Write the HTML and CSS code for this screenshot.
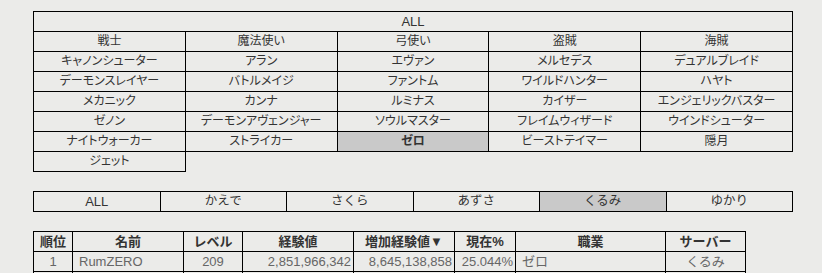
FILE: index.html
```html
<!DOCTYPE html>
<html lang="ja">
<head>
<meta charset="utf-8">
<link rel="stylesheet" href="styles.css">
</head>
<body>
<div class="page">
<table class="grid jobs">
<tr><td class="all" colspan="5">ALL</td></tr>
<tr><td>戦士</td><td>魔法使い</td><td>弓使い</td><td>盗賊</td><td>海賊</td></tr>
<tr><td>キャノンシューター</td><td>アラン</td><td>エヴァン</td><td>メルセデス</td><td>デュアルブレイド</td></tr>
<tr><td>デーモンスレイヤー</td><td>バトルメイジ</td><td>ファントム</td><td>ワイルドハンター</td><td>ハヤト</td></tr>
<tr><td>メカニック</td><td>カンナ</td><td>ルミナス</td><td>カイザー</td><td>エンジェリックバスター</td></tr>
<tr><td>ゼノン</td><td>デーモンアヴェンジャー</td><td>ソウルマスター</td><td>フレイムウィザード</td><td>ウインドシューター</td></tr>
<tr><td>ナイトウォーカー</td><td>ストライカー</td><td class="sel">ゼロ</td><td>ビーストテイマー</td><td>隠月</td></tr>
<tr><td>ジェット</td><td class="empty" colspan="4"></td></tr>
</table>

<table class="grid servers">
<tr><td class="all">ALL</td><td>かえで</td><td>さくら</td><td>あずさ</td><td class="sel">くるみ</td><td>ゆかり</td></tr>
</table>

<table class="grid rank">
<colgroup>
<col class="c1"><col class="c2"><col class="c3"><col class="c4"><col class="c5"><col class="c6"><col class="c7"><col class="c8">
</colgroup>
<tr class="head"><th>順位</th><th>名前</th><th>レベル</th><th>経験値</th><th>増加経験値▼</th><th>現在%</th><th>職業</th><th>サーバー</th></tr>
<tr class="row"><td class="ctr">1</td><td class="lft">RumZERO</td><td class="ctr">209</td><td class="rgt">2,851,966,342</td><td class="rgt">8,645,138,858</td><td class="rgt">25.044%</td><td class="lft">ゼロ</td><td class="ctr">くるみ</td></tr>
<tr class="row"><td class="ctr">&nbsp;</td><td></td><td></td><td></td><td></td><td></td><td></td><td></td></tr>
</table>
</div>
</body>
</html>
```

FILE: styles.css
```css
html, body {
  margin: 0;
  padding: 0;
  background: #ebebe9;
}
body {
  font-family: "Liberation Sans", "Noto Sans CJK JP", sans-serif;
  font-size: 13px;
  color: #333;
  overflow: hidden;
}
.page {
  padding: 11px 0 0 33px;
}
.grid {
  border-collapse: collapse;
  table-layout: fixed;
}
.grid td, .grid th {
  border: 1px solid #000;
  padding: 0;
  height: 19px;
  line-height: 19px;
  text-align: center;
  white-space: nowrap;
  overflow: hidden;
}
.jobs {
  width: 760px;
}
.jobs td {
  width: 20%;
  font-size: 12px;
  font-feature-settings: "palt";
}
.jobs td.all {
  font-size: 13px;
}
.jobs td.empty {
  border-left: 1px solid #000;
  border-right: none;
  border-bottom: none;
}
.sel {
  background: #c9c9c9;
  font-weight: bold;
}
.servers .sel {
  font-weight: normal;
}
.servers {
  width: 760px;
  margin-top: 19px;
}
.servers td {
  font-size: 12.5px;
}
.servers td.all {
  font-size: 13px;
}
.rank {
  width: 712px;
  margin-top: 19px;
}
.rank th {
  font-weight: bold;
  color: #333;
}
.rank .row td {
  color: #666;
}
.rank td.lft { text-align: left; padding-left: 6px; }
.rank td.rgt { text-align: right; padding-right: 2px; }
.c1 { width: 39px; }
.c2 { width: 111px; }
.c3 { width: 59px; }
.c4 { width: 111px; }
.c5 { width: 101px; }
.c6 { width: 61px; }
.c7 { width: 150px; }
.c8 { width: 80px; }
```
